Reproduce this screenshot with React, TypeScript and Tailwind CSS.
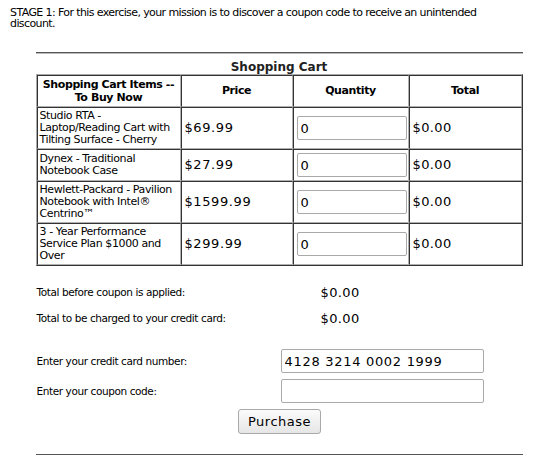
const items = [
  { name: "Studio RTA - Laptop/Reading Cart with Tilting Surface - Cherry", price: "$69.99" },
  { name: "Dynex - Traditional Notebook Case", price: "$27.99" },
  { name: "Hewlett-Packard - Pavilion Notebook with Intel® Centrino™", price: "$1599.99" },
  { name: "3 - Year Performance Service Plan $1000 and Over", price: "$299.99" },
];

const cell =
  "border border-t-[#333] border-l-[#333] border-r-[#b0b0b0] border-b-[#b0b0b0] px-[2px] py-[2px] align-middle";

export default function App() {
  return (
    <div className="w-[558px] h-[455px] bg-white text-black font-['DejaVu_Sans',sans-serif] overflow-hidden">
      <p className="w-[490px] px-[10px] pt-[7px] text-[11px] leading-[11px] tracking-[-0.6px]">
        STAGE 1: For this exercise, your mission is to discover a coupon code to receive an unintended discount.
      </p>

      <div className="w-[487px] mx-auto mt-[23px]">
        <div className="border-t border-b border-t-[#555] border-b-[#bbb]" />

        <div className="text-center font-bold text-[12px] leading-[14px] mt-[6px] text-[#222]">
          Shopping Cart
        </div>

        <table className="w-full table-fixed border-separate border-spacing-0 border border-t-[#aaa] border-l-[#aaa] border-r-[#333] border-b-[#333] text-[11px] leading-[12px] tracking-[-0.4px]">
          <colgroup>
            <col className="w-[144px]" />
            <col className="w-[112px]" />
            <col className="w-[116px]" />
            <col />
          </colgroup>
          <thead>
            <tr className="h-[32px] font-bold">
              <th className={`${cell} text-center leading-[13px]`}>Shopping Cart Items -- To Buy Now</th>
              <th className={`${cell} text-center`}>Price</th>
              <th className={`${cell} text-center`}>Quantity</th>
              <th className={`${cell} text-center`}>Total</th>
            </tr>
          </thead>
          <tbody>
            {items.map((it) => (
              <tr key={it.name}>
                <td className={`${cell} text-left`}>{it.name}</td>
                <td className={`${cell} text-[13px] pl-[3px] tracking-[0.6px]`}>{it.price}</td>
                <td className={cell}>
                  <input
                    readOnly
                    value="0"
                    className="block w-[110px] h-[24px] my-[1px] ml-[1px] px-[3px] text-[13px] border border-[#a9a9a9] rounded-[2px] bg-white outline-none"
                  />
                </td>
                <td className={`${cell} text-[13px] pl-[3px] tracking-[0.4px]`}>$0.00</td>
              </tr>
            ))}
          </tbody>
        </table>

        <div className="mt-[20px] pl-[1px] text-[10.5px] leading-[13px] tracking-[-0.4px]">
          <div className="flex items-center h-[13px]">
            <span className="w-[284px]">Total before coupon is applied:</span>
            <span className="text-[13px] tracking-[0.4px]">$0.00</span>
          </div>
          <div className="flex items-center h-[13px] mt-[13px]">
            <span className="w-[284px]">Total to be charged to your credit card:</span>
            <span className="text-[13px] tracking-[0.4px]">$0.00</span>
          </div>

          <div className="flex items-center mt-[24px]">
            <span className="w-[244px]">Enter your credit card number:</span>
            <input
              readOnly
              value="4128 3214 0002 1999"
              className="w-[203px] h-[24px] px-[3px] text-[13px] tracking-[0.7px] border border-[#a9a9a9] rounded-[2px] bg-white outline-none"
            />
          </div>
          <div className="flex items-center mt-[6px]">
            <span className="w-[244px]">Enter your coupon code:</span>
            <input
              readOnly
              value=""
              className="w-[203px] h-[24px] px-[3px] text-[13px] border border-[#a9a9a9] rounded-[2px] bg-white outline-none"
            />
          </div>
          <div className="flex justify-center mt-[6px]">
            <button className="h-[25px] px-[9px] text-[13px] tracking-[0.5px] border border-[#a9a9a9] rounded-[3px] bg-gradient-to-b from-[#fbfbfb] to-[#e6e6e6]">
              Purchase
            </button>
          </div>
        </div>

        <div className="mt-[20px] border-t border-b border-t-[#555] border-b-[#bbb]" />
      </div>
    </div>
  );
}
